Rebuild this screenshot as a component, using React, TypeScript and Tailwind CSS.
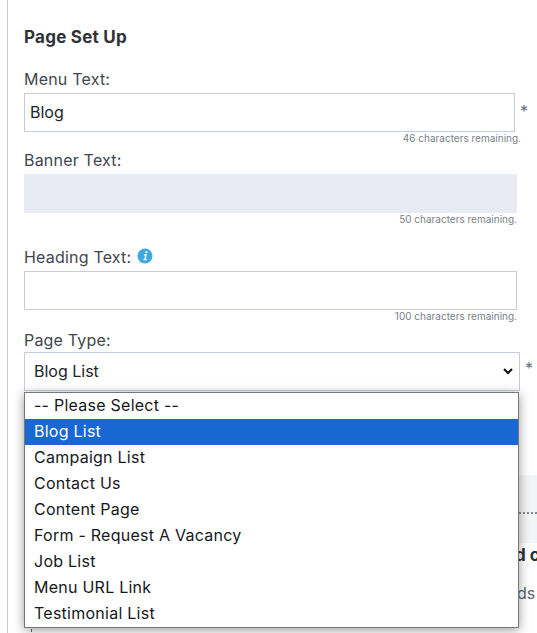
const FONT = "font-['Inter','Liberation_Sans',sans-serif]";

function Field({ label, children, hint, hintClass }: { label: React.ReactNode; children: React.ReactNode; hint: string; hintClass: string }) {
  return (
    <div>
      <div className="text-[16px] tracking-[0.2px] leading-[22px] text-[#41464f]">{label}</div>
      {children}
      <div className={`text-[10px] leading-[13px] text-[#7b8088] text-right ${hintClass}`}>{hint}</div>
    </div>
  );
}

const OPTIONS = ["-- Please Select --", "Blog List", "Campaign List", "Contact Us", "Content Page", "Form - Request A Vacancy", "Job List", "Menu URL Link", "Testimonial List"];

export default function App() {
  return (
    <div className={`${FONT} relative w-[537px] h-[633px] overflow-hidden bg-white`}>
      <div className="ml-[7px] h-[633px] border-l border-[#c5cce0] pl-4 pt-[26px]">
        <h2 className="text-[17px] tracking-[0.25px] leading-[22px] font-bold text-[#2f3237]">Page Set Up</h2>

        <div className="mt-[20px]">
          <Field label="Menu Text:" hint="46 characters remaining." hintClass="w-[497px]">
            <div className="flex items-center mt-[3px]">
              <div className="w-[491px] h-[39px] border border-[#c5cce0] flex items-center pl-[5px] pb-[2px] text-[16px] text-[#212529]">Blog</div>
              <span className="ml-[5px] mb-[4px] text-[16px] leading-[16px] text-[#6b7077]">*</span>
            </div>
          </Field>
        </div>

        <div className="mt-[4px]">
          <Field label="Banner Text:" hint="50 characters remaining." hintClass="w-[493px]">
            <div className="w-[493px] h-[39px] mt-[3px] bg-[#e8ebf3]" />
          </Field>
        </div>

        <div className="mt-[20px]">
          <Field
            label={
              <span className="flex items-center gap-[6px]">
                Heading Text:
                <svg width="16" height="16" viewBox="0 0 16 16" className="-mt-[2px]">
                  <circle cx="8" cy="8" r="7.5" fill="#41a7e1" />
                  <path d="M8.6 3.2h2l-.35 2H8.25zM6.9 6.3h2.9L8.9 11h.9l-.2 1.2H6.4l.2-1.2h.8l.6-3.5h-.9z" fill="#fff" />
                </svg>
              </span>
            }
            hint="100 characters remaining."
            hintClass="w-[493px]"
          >
            <div className="w-[493px] h-[39px] mt-[3px] border border-[#c5cce0]" />
          </Field>
        </div>

        <div className="mt-[6px] text-[16px] tracking-[0.2px] leading-[22px] text-[#41464f]">Page Type:</div>
        <div className="flex items-start mt-[1px]">
          <div className="w-[496px] h-[39px] border border-[#c5cce0] flex items-center justify-between pl-[9px] pr-[6px] text-[16px] text-[#212529]">
            <span className="-mt-[2px]">Blog List</span>
            <svg width="10" height="7" viewBox="0 0 10 7" fill="none" stroke="#111" strokeWidth="2">
              <path d="M1 1l4 4 4-4" />
            </svg>
          </div>
          <span className="ml-[5px] text-[16px] leading-[16px] text-[#6b7077] mt-[8px]">*</span>
        </div>

        <div className="mt-[84px] h-[68px] bg-[#f3f4f6] relative">
          <div className="absolute left-0 right-0 top-[37px] border-t-2 border-dotted border-[#85888e]" />
        </div>
        <div className="mt-[3px] pl-[491px] text-[17px] leading-[18px] font-bold text-[#2f3237] whitespace-nowrap">d c</div>
        <div className="mt-[20px] pl-[493px] text-[16px] leading-[18px] text-[#5c6470] whitespace-nowrap">ds</div>
      </div>

      <div className="absolute left-[24px] top-[392px] w-[495px] h-[236px] bg-white border border-[#76787c] shadow-[0_2px_10px_rgba(0,0,0,0.4)] text-[16px] tracking-[0.25px] text-[#15181c]">
        {OPTIONS.map((o, i) => (
          <div key={o} className={`h-[26px] leading-[24px] pl-[9px] whitespace-nowrap ${i === 1 ? "bg-[#1967d2] text-white" : ""}`}>{o}</div>
        ))}
      </div>
      <div className="absolute left-[31px] top-[629px] w-[1px] h-[3px] bg-[#555]" />
    </div>
  );
}
